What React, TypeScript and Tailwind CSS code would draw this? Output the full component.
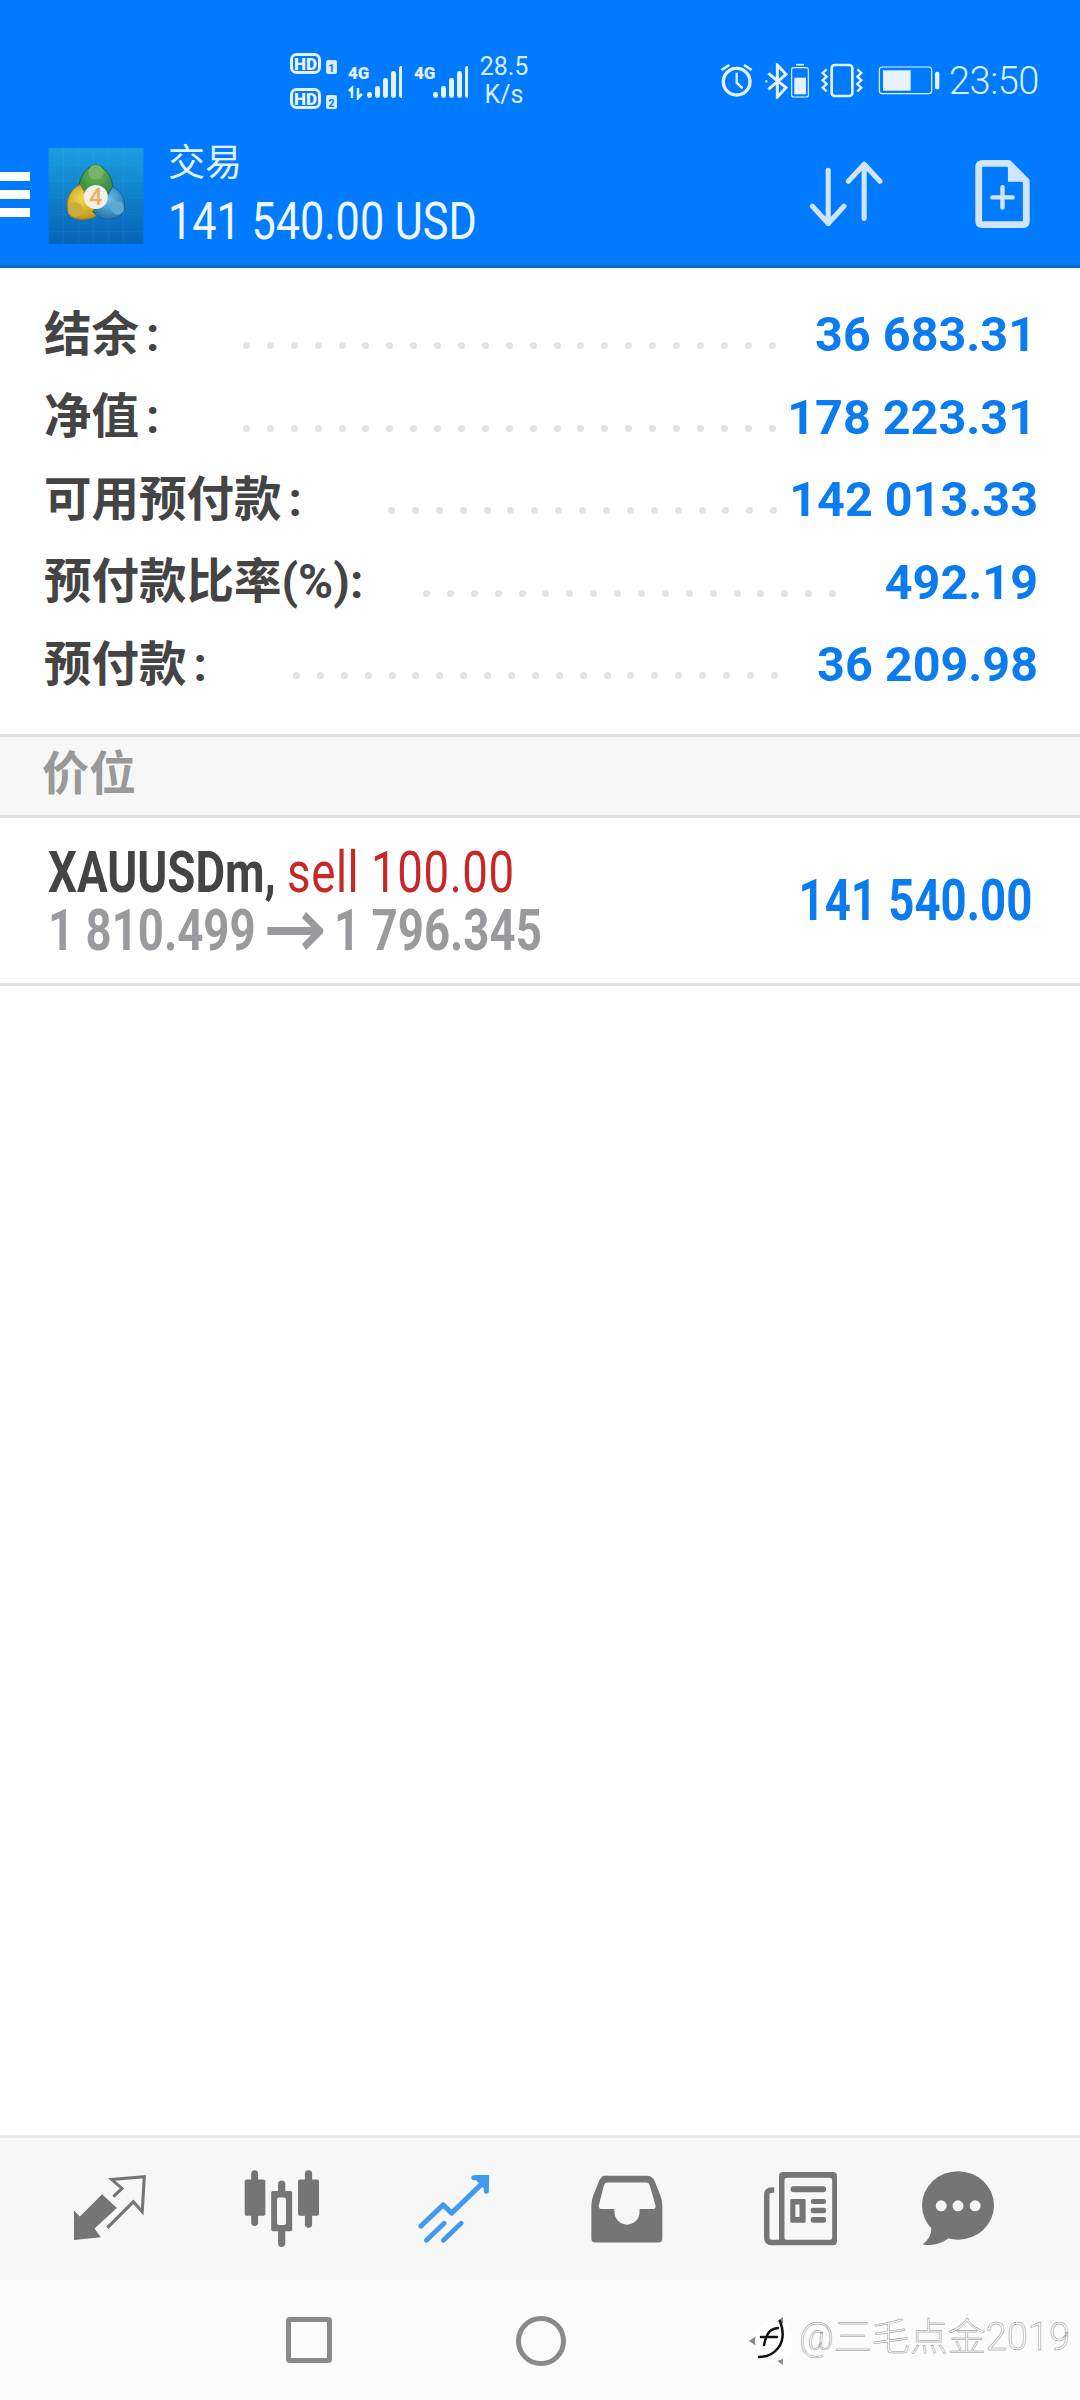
import React from "react";

const CJK = "font-['Roboto','Noto_Sans_CJK_SC',sans-serif]";

function Dots({ n }: { n: number }) {
  return (
    <div className="flex gap-[16.9px] shrink-0">
      {Array.from({ length: n }).map((_, i) => (
        <span key={i} className="w-[7px] h-[7px] rounded-full bg-[#e2e2e2]" />
      ))}
    </div>
  );
}

function Row({ label, colon, gap, n, value, right }: { label: string; colon: boolean; gap: number; n: number; value: string; right: number }) {
  return (
    <div className="h-[82.6px] flex items-center relative pl-[44px]">
      <span className={`${CJK} text-[47.5px] leading-none font-bold text-[#444444] whitespace-nowrap`}>
        {label}
        {colon ? <span className="ml-[7px]">:</span> : null}
      </span>
      <div className="absolute top-[48px]" style={{ left: gap }}>
        <Dots n={n} />
      </div>
      <span className="absolute font-['Roboto',sans-serif] text-[48.5px] leading-none font-bold text-[#0b7cf0] whitespace-nowrap" style={{ right }}>
        {value}
      </span>
    </div>
  );
}

function HD({ n }: { n: string }) {
  return (
    <svg width="48" height="21" viewBox="0 0 48 21">
      <rect x="1.5" y="1.5" width="28" height="18" rx="5" fill="#007aff" stroke="#e2f0ff" strokeWidth="3" />
      <text x="15.5" y="16.500" textAnchor="middle" fontFamily="Roboto" fontWeight="900" fontSize="17" fill="#e8f4ff">HD</text>
      <rect x="36" y="7" width="11" height="14" rx="2" fill="#d8ecff" />
      <text x="41.5" y="18.5" textAnchor="middle" fontFamily="Roboto" fontWeight="700" fontSize="11" fill="#007aff">{n}</text>
    </svg>
  );
}

function Signal({ arrows }: { arrows: boolean }) {
  const hs = [6, 12, 20, 27, 32];
  return (
    <svg width="54" height="36" viewBox="0 0 54 36">
      <text x="0" y="15" fontFamily="Roboto" fontWeight="900" fontSize="17" fill="#e4f2ff">4G</text>
      {arrows ? <path d="M4 34V24l-3 3M10 24v10l4-4" fill="none" stroke="#e4f2ff" strokeWidth="2.5" /> : null}
      {hs.map((h, i) => (
        <rect key={i} x={19 + i * 8} y={34 - h} width="5" height={h} rx="2.4" fill="#e4f2ff" />
      ))}
    </svg>
  );
}

function StatusIcons() {
  return (
    <svg viewBox="60 66 660 108" preserveAspectRatio="xMinYMid meet" style={{ width: 220, height: 36 }}>
      <g fill="none" stroke="#e4f2ff">
        <circle cx="110" cy="122" r="40" strokeWidth="10" />
        <path d="M110 95V125L128 142" strokeWidth="7" />
        <path d="M65 87L88 72M155 87L132 72" strokeWidth="8" />
        <path d="M205 97L258 140L232 168V72L258 100L205 145" strokeWidth="9" />
        <path d="M196 121h6" strokeWidth="7" />
        <rect x="275" y="80" width="50" height="88" rx="6" strokeWidth="3.5" />
        <path d="M288 71h24" strokeWidth="5" />
        <rect x="395" y="72" width="62" height="93" rx="9" strokeWidth="8" />
        <path d="M380 85l-12 11l12 11l-12 11l12 11l-12 11l12 11" strokeWidth="7" />
        <path d="M472 85l12 11l-12 11l12 11l-12 11l12 11l-12 11" strokeWidth="7" />
        <rect x="538" y="78" width="157" height="80" rx="9" strokeWidth="3.5" />
      </g>
      <rect x="283" y="110" width="35" height="50" fill="#e8f2ff" />
      <rect x="549" y="88" width="83" height="61" fill="#e8f2ff" />
      <rect x="705" y="92" width="13" height="53" rx="5" fill="#e4f2ff" />
    </svg>
  );
}

function Logo() {
  return (
    <svg width="96" height="96" viewBox="55 50 285 288" className="shrink-0">
      <defs>
        <linearGradient id="bg" x1="0" y1="0" x2="0" y2="1">
          <stop offset="0" stopColor="#1a9ee0" />
          <stop offset="1" stopColor="#0763b8" />
        </linearGradient>
        <radialGradient id="gr" cx="0.5" cy="0.25" r="0.8">
          <stop offset="0" stopColor="#6fb85f" />
          <stop offset="1" stopColor="#1f7a36" />
        </radialGradient>
        <radialGradient id="ye" cx="0.4" cy="0.4" r="0.7">
          <stop offset="0" stopColor="#f2d94f" />
          <stop offset="1" stopColor="#b98a12" />
        </radialGradient>
        <radialGradient id="bl" cx="0.5" cy="0.4" r="0.7">
          <stop offset="0" stopColor="#6cc0e8" />
          <stop offset="1" stopColor="#1a6aa8" />
        </radialGradient>
      </defs>
      <rect x="55" y="50" width="285" height="288" fill="url(#bg)" />
      <path d="M100 50V338M145 50V338M190 50V338M235 50V338M280 50V338M55 100H340M55 150H340M55 200H340M55 250H340M55 300H340" stroke="#ffffff" strokeOpacity="0.07" strokeWidth="2" />
      <path d="M197 100C160 108 140 150 147 195L197 205L248 195C254 150 234 108 197 100Z" fill="url(#gr)" stroke="#1d6b30" strokeWidth="3" />
      <path d="M150 160C112 178 100 225 122 256C155 272 198 262 218 240L172 195Z" fill="url(#ye)" stroke="#a07a14" strokeWidth="3" />
      <path d="M247 165C284 185 294 226 272 252C240 272 204 264 188 240L225 205Z" fill="url(#bl)" stroke="#155f98" strokeWidth="3" />
      <circle cx="197" cy="122" r="22" fill="#7ab36c" />
      <circle cx="135" cy="235" r="22" fill="#c9ad3e" />
      <circle cx="262" cy="230" r="20" fill="#5ba9cc" />
      <circle cx="197" cy="197" r="36" fill="#f3f0ea" />
      <text x="197" y="222" textAnchor="middle" fontFamily="Roboto" fontWeight="500" fontSize="70" fill="#efab5c">4</text>
    </svg>
  );
}

const Gray = "#757575";

export default function App() {
  return (
    <div className="w-[1080px] h-[2400px] flex flex-col bg-white overflow-hidden font-['Roboto',sans-serif]">
      <header className="h-[268px] shrink-0 bg-[#007aff] border-b-[3px] border-[#0a6bc4] flex flex-col">
        <div className="h-[130px] flex items-center pl-[290px] pt-[32px]">
          <div className="flex flex-col gap-[14px]">
            <HD n="1" />
            <HD n="2" />
          </div>
          <div className="ml-[10px] mt-[2px]"><Signal arrows /></div>
          <div className="ml-[12px] mt-[2px]"><Signal arrows={false} /></div>
          <div className="ml-[11px] w-[50px] flex flex-col items-center text-[#d8ecff] text-[25px] leading-[28px]">
            <span>28.5</span>
            <span>K/s</span>
          </div>
          <div className="ml-[191px] flex items-center">
            <StatusIcons />
          </div>
          <span className="ml-[9px] text-[#d8f0ff] text-[38px] leading-none font-light tracking-[-0.5px]">23:50</span>
        </div>
        <div className="flex-1 flex items-center relative">
          <div className="w-[30px] flex flex-col gap-[9px] -mt-[6px] shrink-0">
            <span className="h-[9px] bg-white" />
            <span className="h-[9px] bg-white" />
            <span className="h-[9px] bg-white" />
          </div>
          <div className="ml-[18px] -mt-[4px]"><Logo /></div>
          <div className="ml-[24px] flex flex-col mt-[1px]">
            <span className={`${CJK} text-[37px] leading-[42px] text-[#e6f3ff]`}>交易</span>
            <span className="inline-block origin-left scale-x-[0.83] whitespace-nowrap text-[52px] leading-[62px] text-[#eef7ff] mt-[6px]">141 540.00 USD</span>
          </div>
          <svg width="74" height="66" viewBox="780 488 216 192" className="absolute left-[809px] top-[31px]" fill="none" stroke="#cfe5ff" strokeWidth="15" strokeLinecap="round" strokeLinejoin="round">
            <path d="M836 515V670M790 620L836 670L882 620" />
            <path d="M941 497V655M895 547L941 497L987 547" />
          </svg>
          <svg width="55" height="68" viewBox="1262 485 160 200" className="absolute left-[975px] top-[30px]">
            <path d="M1285 495H1360L1412 547V665Q1412 675 1402 675H1282Q1272 675 1272 665V505Q1272 495 1285 495Z" fill="none" stroke="#cfe5ff" strokeWidth="20" strokeLinejoin="round" />
            <path d="M1358 495L1412 549H1358Z" fill="#cfe5ff" />
            <path d="M1342 565V625M1312 595H1372" stroke="#cfe5ff" strokeWidth="13" strokeLinecap="round" />
          </svg>
        </div>
      </header>

      <section className="pt-[26px] h-[466px] shrink-0">
        <Row label="结余" colon gap={243} n={23} value="36 683.31" right={44} />
        <Row label="净值" colon gap={243} n={23} value="178 223.31" right={44} />
        <Row label="可用预付款" colon gap={388} n={17} value="142 013.33" right={42} />
        <Row label="预付款比率(%):" colon={false} gap={423} n={18} value="492.19" right={42} />
        <Row label="预付款" colon gap={293} n={21} value="36 209.98" right={42} />
      </section>

      <div className="h-[84px] shrink-0 bg-[#f7f7f7] border-y-[3px] border-[#e3e3e3] flex items-center pl-[42px] pb-[5px]">
        <span className={`${CJK} text-[47px] leading-none font-bold text-[#999999]`}>价位</span>
      </div>

      <div className="h-[168px] shrink-0 border-b-[3px] border-[#e3e3e3] flex items-center justify-between relative">
        <div className="flex flex-col pl-[48px]">
          <div className="h-[58px] mt-[2px] origin-left scale-x-[0.8] whitespace-nowrap text-[57px] leading-[58px]">
            <span className="font-bold text-[#444444]">XAUUSDm, </span>
            <span className="text-[#c62828] tracking-[0.7px]">sell 100.00</span>
          </div>
          <div className="h-[58px] flex items-center gap-[14px] origin-left scale-x-[0.8] whitespace-nowrap text-[57px] leading-[58px] font-bold text-[#9a9a9e]">
            <span>1 810.499</span>
            <svg width="70" height="38" viewBox="0 0 70 38" className="shrink-0" fill="none" stroke="#9a9a9e" strokeWidth="8">
              <path d="M0 19H66M46 3L66 19L46 35" />
            </svg>
            <span>1 796.345</span>
          </div>
        </div>
        <span className="pr-[60px] origin-right scale-x-[0.8] whitespace-nowrap text-[57px] leading-none font-bold text-[#0b7cf0]">141 540.00</span>
      </div>

      <div className="flex-1 bg-white" />

      <nav className="h-[145px] shrink-0 bg-[#f7f7f7] border-t-[3px] border-[#e8e8e8] relative">
        <svg width="72" height="66" viewBox="215 170 210 190" className="absolute left-[74px] top-[37px]">
          <path d="M215 272L232 290L297 225L340 265L275 325L293 350L215 358Z" fill={Gray} />
          <path d="M330 232L355 208L325 182L420 174L414 276L388 247L312 323" fill="none" stroke={Gray} strokeWidth="9" />
        </svg>
        <svg width="75" height="78" viewBox="708 150 218 225" className="absolute left-[244px] top-[31px]" fill={Gray}>
          <rect x="710" y="180" width="60" height="105" rx="5" />
          <rect x="729" y="153" width="20" height="162" rx="10" />
          <path fillRule="evenodd" d="M792 213H843Q848 213 848 218V325Q848 330 843 330H792Q787 330 787 325V218Q787 213 792 213ZM810 232Q804 232 804 238V306Q804 312 810 312H824Q830 312 830 306V238Q830 232 824 232Z" />
          <path fillRule="evenodd" d="M807 193a10.500 10.500 0 0 1 21 0V215H807ZM807 328H828V365a10.500 10.500 0 0 1 -21 0Z" />
          <rect x="865" y="180" width="61" height="105" rx="5" />
          <rect x="885" y="153" width="21" height="167" rx="10" />
        </svg>
        <svg width="72" height="68" viewBox="1212 160 210 200" className="absolute left-[418px] top-[37px]" fill="none" stroke="#4299f0" strokeLinecap="round" strokeLinejoin="round">
          <path d="M1220 310L1285 248L1310 272L1405 180" strokeWidth="15" />
          <path d="M1375 168L1413 166L1412 208" strokeWidth="15" fill="#4299f0" />
          <path d="M1236 352L1288 302M1286 352L1338 302" strokeWidth="14" />
        </svg>
        <svg width="72" height="68" viewBox="145 160 212 200" className="absolute left-[591px] top-[37px]">
          <path fillRule="evenodd" fill={Gray} d="M185 162H310Q325 162 332 177L350 222Q355 237 355 252V347Q355 359 343 359H158Q146 359 146 347V252Q146 237 151 222L169 177Q176 162 185 162ZM192 182Q186 182 183 190L168 250Q167 260 175 260H214V268A36 37 0 0 0 288 268V260H328Q336 260 335 250L318 190Q315 182 309 182Z" />
        </svg>
        <svg width="75" height="75" viewBox="645 150 220 220" className="absolute left-[763px] top-[33px]">
          <path fillRule="evenodd" fill={Gray} d="M704 153H850Q862 153 862 165V356Q862 368 850 368H704Q692 368 692 356V165Q692 153 704 153ZM716 170Q708 170 708 178V344Q708 352 716 352H840Q848 352 848 344V178Q848 170 840 170Z" />
          <path d="M678 206H672Q656 206 656 221V344Q656 360 672 360H700" fill="none" stroke={Gray} strokeWidth="16" />
          <rect x="726" y="195" width="104" height="17" rx="8" fill={Gray} />
          <path fillRule="evenodd" fill={Gray} d="M729 232H766Q770 232 770 236V298Q770 302 766 302H729Q725 302 725 298V236Q725 232 729 232ZM740 248V285H752V248Z" />
          <rect x="785" y="232" width="45" height="15" rx="7" fill={Gray} />
          <rect x="785" y="258" width="45" height="16" rx="7" fill={Gray} />
          <rect x="785" y="285" width="45" height="17" rx="7" fill={Gray} />
        </svg>
        <svg width="72" height="75" viewBox="1108 152 210 218" className="absolute left-[922px] top-[33px]">
          <ellipse cx="1213" cy="252" rx="105" ry="100" fill={Gray} />
          <path d="M1135 315Q1138 345 1110 365Q1150 375 1190 345Z" fill={Gray} />
          <circle cx="1164" cy="253" r="16" fill="#f7f7f7" />
          <circle cx="1213" cy="253" r="16" fill="#f7f7f7" />
          <circle cx="1263" cy="253" r="16" fill="#f7f7f7" />
        </svg>
      </nav>

      <div className="h-[120px] shrink-0 bg-[#fbfbfb] relative">
        <div className="absolute left-[286px] top-[37px] w-[46px] h-[46px] rounded-[4px] border-[5px] border-[#8a8a8a]" />
        <div className="absolute left-[516px] top-[36px] w-[50px] h-[50px] rounded-full border-[5px] border-[#8a8a8a]" />
        <svg width="45" height="52" viewBox="0 0 45 52" className="absolute left-[747px] top-[35px]">
          <path d="M36 2L2 26L36 50Z" fill="#8a8a8a" />
          <ellipse cx="27" cy="26" rx="19" ry="20" fill="#ffffff" />
          <path d="M17 30C20 16 24 14 31 13M14 22H30M12 42C26 42 42 30 33 6" fill="none" stroke="#111111" strokeWidth="2.5" strokeLinecap="round" />
        </svg>
        <span className="absolute left-[799px] top-[34px] font-['Roboto','Noto_Sans_CJK_SC',sans-serif] font-light text-[38px] leading-[46px] whitespace-nowrap text-white [-webkit-text-stroke:0.5px_#8c8c8c]">@三毛点金2019</span>
      </div>
    </div>
  );
}
